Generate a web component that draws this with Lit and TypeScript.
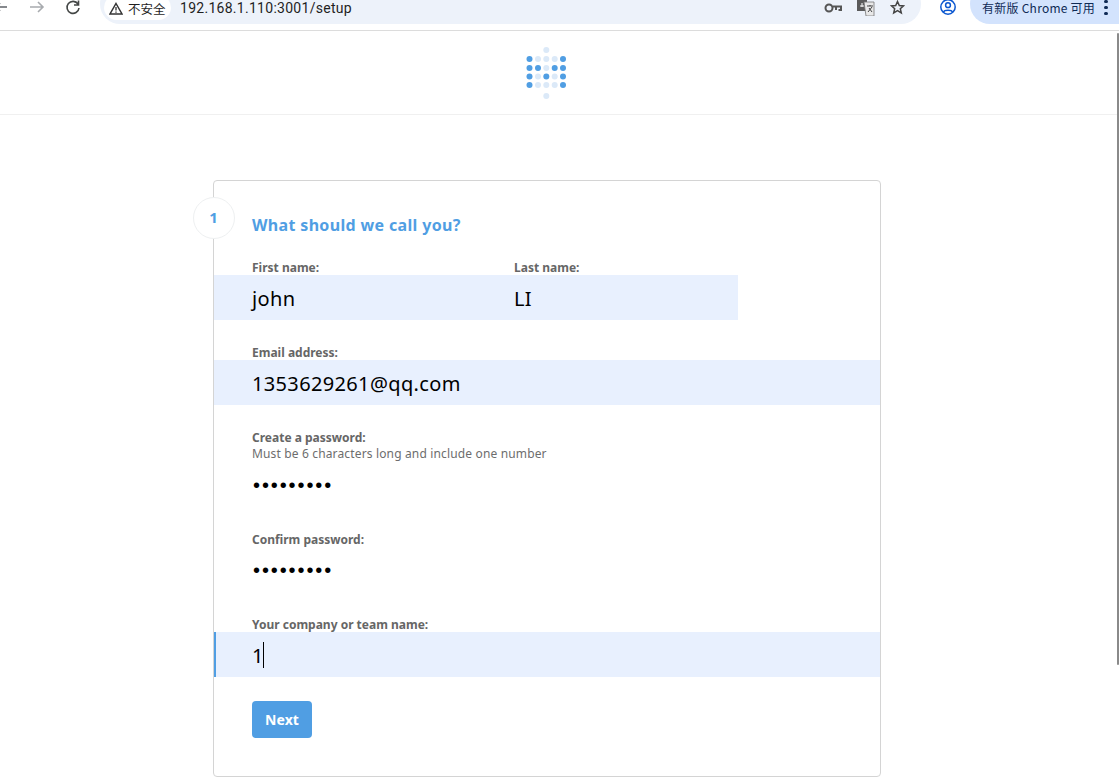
import { LitElement, html, css, svg } from "lit";
import { customElement } from "lit/decorators.js";

const DARK = "#509ee3";
const LIGHT = "#dbe9f8";
const logoRows = ["DLLLD", "DDLDD", "DLDLD", "DLLLD"];

@customElement("app-root")
export class AppRoot extends LitElement {
  static styles = css`
    :host { display: block; width: 1119px; height: 784px; overflow: hidden; background: #fff; position: relative; font-family: "Noto Sans", "Noto Sans CJK SC", sans-serif; }
    * { box-sizing: border-box; }
    .toolbar { height: 31px; border-bottom: 1px solid #dcdcdc; display: flex; align-items: flex-end; padding-bottom: 6px; overflow: hidden; position: relative; }
    .nav { width: 100px; height: 24px; flex: none; display: flex; }
    .nav svg { display: block; }
    .pill { flex: none; width: 821px; height: 40px; background: #edf2fa; border-radius: 20px; display: flex; align-items: flex-end; padding: 0 0 6px 4px; }
    .chip { width: 67px; height: 25px; margin-bottom: -2px; background: #fff; border-radius: 13px; display: flex; align-items: center; padding: 2px 0 0 5px; gap: 5px; font-size: 12.5px; color: #1f1f1f; font-family: "Noto Sans CJK SC", sans-serif; flex: none; }
    .url { font-family: Roboto, sans-serif; font-size: 14px; color: #1f1f1f; margin-left: 9px; letter-spacing: .28px; line-height: 18px; flex: none; margin-bottom: 1px; }
    .pill-icons { margin-left: auto; display: flex; align-items: flex-start; gap: 15px; padding-right: 16px; height: 34px; padding-top: 8px; margin-bottom: -6px; }
    .key { margin-top: 4px; }
    .star { margin-top: 2px; }
    .profile { margin-left: 19px; flex: none; width: 30px; height: 24px; display: flex; align-items: flex-start; }
    .update { flex: none; width: 149px; height: 40px; background: #d3e3fd; border-radius: 20px 0 0 20px; display: flex; align-items: flex-end; padding: 0 0 8px 12px; font-size: 12px; letter-spacing: .25px; color: #0f2a55; font-family: "Noto Sans CJK SC", sans-serif; line-height: 16px; position: relative; }
    .kebab { position: absolute; left: 134px; bottom: 9px; display: flex; flex-direction: column; gap: 2.500px; }
    .kebab i { display: block; width: 3.500px; height: 3.500px; border-radius: 50%; background: #0f2a55; }

    .head { height: 84px; border-bottom: 1px solid #f0f0f0; display: flex; align-items: center; justify-content: center; padding-right: 26px; }
    .head svg { display: block; }
    main { padding: 65px 0 0 213px; }
    .card { position: relative; width: 668px; height: 597px; border: 1px solid #d4d4d4; border-radius: 4px; padding-top: 32px; }
    .step { position: absolute; left: -21px; top: 16px; width: 42px; height: 42px; border-radius: 50%; border: 1px solid #eef0f1; background: #fff; display: flex; align-items: center; justify-content: center; color: #509ee3; font-weight: 700; font-size: 15px; padding: 0 1px 3px 0; }
    h2 { margin: 0 0 23px 38px; color: #509ee3; font-size: 16px; line-height: 24px; font-weight: 700; letter-spacing: .34px; }
    .label { display: block; padding-left: 38px; font-size: 12px; line-height: 16px; font-weight: 700; color: #666; height: 16px; margin-bottom: -1px; }
    .hint { display: block; padding-left: 38px; font-size: 12px; line-height: 16px; color: #6d6d6d; height: 16px; margin-top: 1px; letter-spacing: .15px; }
    .val { height: 45px; padding: 2px 0 0 38px; display: flex; align-items: center; font-size: 20px; color: #000; letter-spacing: .35px; }
    .fill { background: #e8f0fe; }
    .dots { letter-spacing: 1.900px; font-size: 20px; font-family: "Liberation Sans", sans-serif; padding-left: 39px; }
    .field { margin-bottom: 25px; }
    .row { width: 524px; display: grid; grid-template-columns: 262px 262px; }
    .active { box-shadow: inset 2px 0 0 #509ee3; }
    .caret { display: inline-block; width: 1px; height: 26px; background: #000; margin: -2px 0 0 -1px; }
    .next { margin: -1px 0 0 38px; width: 60px; height: 37px; background: #509ee3; border-radius: 4px; color: #fff; font-weight: 700; font-size: 14px; display: flex; align-items: center; justify-content: center; letter-spacing: .1px; }
    .scroll { position: absolute; left: 1117px; top: 33px; width: 2px; height: 632px; background: #8a8a8a; border-radius: 1px; }
  `;

  logo() {
    const xs = [3.5, 12, 20.3, 28.7, 37];
    const ys = [12, 21, 29.5, 38];
    return html`<svg width="41" height="52" viewBox="0 0 41 52">
      <circle cx="20.3" cy="3" r="3" fill=${LIGHT}></circle>
      ${logoRows.map((r, j) => [...r].map((c, i) => svg`<circle cx=${xs[i]} cy=${ys[j]} r="3" fill=${c === "D" ? DARK : LIGHT}></circle>`))}
      <circle cx="20.3" cy="49" r="3" fill=${LIGHT}></circle>
    </svg>`;
  }

  render() {
    return html`
      <div class="toolbar">
        <div class="nav">
          <svg width="100" height="24" viewBox="0 0 100 24" fill="none" stroke-width="1.6">
            <path d="M-4 7h11M0 3l-4 4 4 4" stroke="#5f6368"></path>
            <path d="M30 7h13M38 2l5 5-5 5" stroke="#a8abaf"></path>
            <path d="M78 4a6 6 0 1 0 1 4M78.500 .500v4.500h-4.500" stroke="#444746"></path>
          </svg>
        </div>
        <div class="pill">
          <div class="chip">
            <svg width="14" height="13" viewBox="0 0 14 13" fill="none"><path d="M7 1.500L13 12H1z" stroke="#333" stroke-width="1.500"></path><path d="M7 5v3.500M7 9.500v1.200" stroke="#333" stroke-width="1.300"></path></svg>
            <span>不安全</span>
          </div>
          <span class="url">192.168.1.110:3001/setup</span>
          <div class="pill-icons">
            <svg class="key" width="18" height="12" viewBox="0 0 18 12" fill="none" stroke="#555" stroke-width="2"><circle cx="5" cy="6" r="3.500"></circle><path d="M9 4.500h8v3.500h-2.500M12 8V5"></path></svg>
            <svg class="trans" width="18" height="18" viewBox="0 0 18 18"><path d="M0 0h10v13H0z" fill="#5a5a5a"></path><path d="M7 4h10v14H9z" fill="#e8e8e8" stroke="#777" stroke-width=".8"></path><path d="M10 8h6M13 7v1M11 14l4-5M12 10l3 4" stroke="#444" stroke-width="1" fill="none"></path><path d="M3 8h4M5 5v4" stroke="#fff" stroke-width="1"></path></svg>
            <svg class="star" width="15" height="15" viewBox="0 0 15 15" fill="none" stroke="#444" stroke-width="1.500"><path d="M7.500 1.500l1.800 4 4.200.4-3.200 2.800 1 4.200-3.800-2.200-3.800 2.200 1-4.200L1.500 5.900l4.200-.4z"></path></svg>
          </div>
        </div>
        <div class="profile">
          <svg width="16" height="16" viewBox="0 0 16 16" fill="none" stroke="#0b57d0" stroke-width="1.500"><circle cx="8" cy="7" r="7.200"></circle><circle cx="8" cy="5.200" r="2.400"></circle><path d="M3.500 12c1-2.500 8-2.500 9 0"></path></svg>
        </div>
        <div class="update">
          <span>有新版 Chrome 可用</span>
          <div class="kebab"><i></i><i></i><i></i></div>
        </div>
      </div>
      <div class="head">${this.logo()}</div>
      <main>
        <div class="card">
          <div class="step">1</div>
          <h2>What should we call you?</h2>
          <div class="row field">
            <div><span class="label">First name:</span><div class="val fill">john</div></div>
            <div><span class="label">Last name:</span><div class="val fill">LI</div></div>
          </div>
          <div class="field"><span class="label">Email address:</span><div class="val fill">1353629261@qq.com</div></div>
          <div class="field"><span class="label">Create a password:</span><span class="hint">Must be 6 characters long and include one number</span><div class="val dots">•••••••••</div></div>
          <div class="field"><span class="label">Confirm password:</span><div class="val dots">•••••••••</div></div>
          <div class="field"><span class="label">Your company or team name:</span><div class="val fill active">1<span class="caret"></span></div></div>
          <div class="next">Next</div>
        </div>
      </main>
      <div class="scroll"></div>
    `;
  }
}
